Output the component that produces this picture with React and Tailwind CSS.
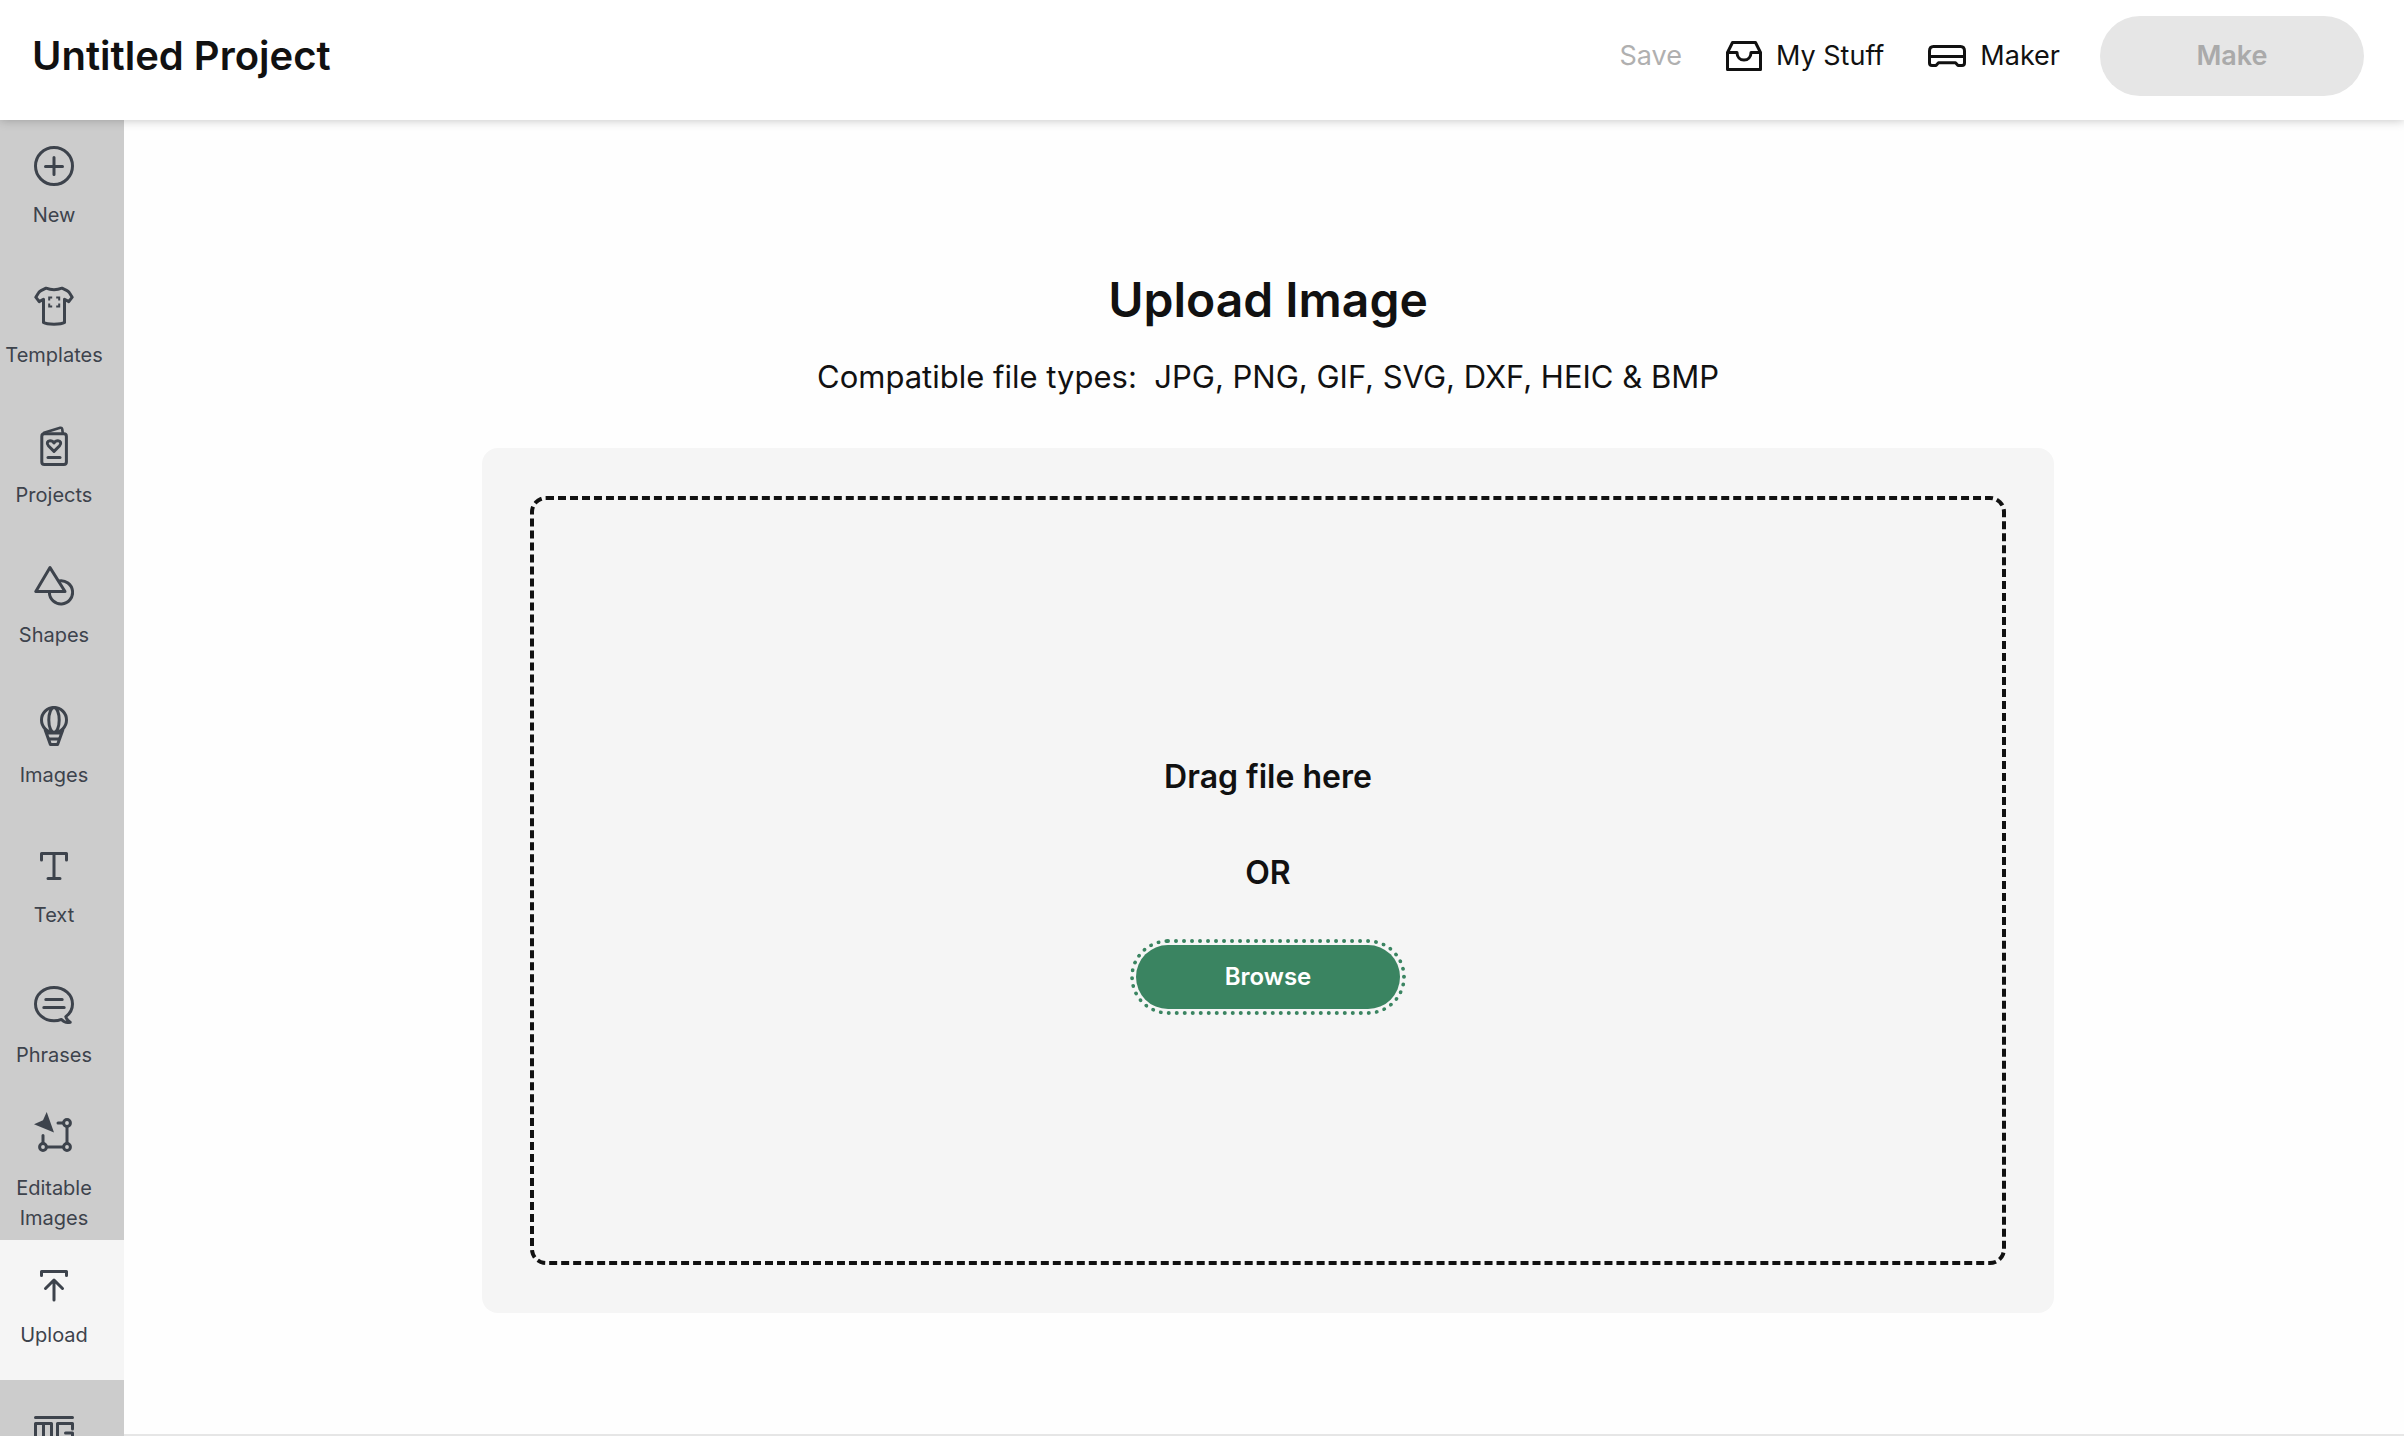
const icons = {
  new: (
    <>
      <circle cx="20" cy="20" r="18.5" />
      <path d="M11.5 20.5h17M20 11.5v17" />
    </>
  ),
  templates: (
    <>
      <path d="M12 2.2C17 4.2 23 4.2 28 2.2L33 4.6Q34.6 5.4 35.4 6.8L38.2 11.2 34.8 15.6 30.5 13.2V36.5C27 38.7 13 38.7 9.5 36.5V13.2L5.2 15.6 1.8 11.2 4.6 6.8Q5.4 5.4 7 4.6Z" />
      <path strokeWidth="2" strokeLinecap="butt" strokeLinejoin="miter" d="M15.2 14.5V11.4H18.2M22.2 11.4H25.2V14.5M25.2 17.5V20.6H22.2M18.2 20.6H15.2V17.5" />
    </>
  ),
  projects: (
    <>
      <rect x="7.8" y="7.8" width="24.6" height="30.7" rx="2.6" />
      <path strokeWidth="2.6" d="M10 6.8 26.2 1.8Q27.8 1.4 28.2 3L28.8 7.2" />
      <path d="M20 25.4 14.6 20C12 17.2 13.6 14.8 16 14.8 18 14.8 19.4 16 20 17 20.6 16 22 14.8 24 14.8 26.4 14.8 28 17.2 25.4 20Z" />
      <path d="M14 31.5h12" />
    </>
  ),
  shapes: (
    <>
      <path d="M16 1.6 1.8 25.5H31Z" />
      <path d="M25 14.9A11.6 11.6 0 1 1 15.4 26.5" />
    </>
  ),
  images: (
    <>
      <circle cx="20" cy="14" r="12.5" />
      <ellipse cx="20" cy="14" rx="5.2" ry="12.5" />
      <path d="M11.2 24 16.4 38.5H23.6L28.8 24M13 27H27M15.5 33H24.5" />
    </>
  ),
  text: <path d="M7.5 14V7.5H32.5V14M20 7.5V32.5M14 32.5H26" />,
  phrases: (
    <>
      <path d="M31.8 30.6C36 27.6 38.5 23 38.5 18 38.5 8.5 30.2 1.5 20 1.5S1.5 8.5 1.5 18 9.8 34.8 20 34.8C22.6 34.8 25.2 34.3 27.5 33.4 29.6 35.9 32.6 37.3 36.2 36.2 34 34.8 32.4 33 31.8 30.6Z" />
      <path d="M11.8 13.5H28.2M9.8 21.5H30.2" />
    </>
  ),
  editable: (
    <>
      <path fill="currentColor" stroke="none" d="M12.7 0 20 20.6 0 12.3 9 8.2Z" />
      <circle cx="33" cy="11" r="3.4" />
      <circle cx="33" cy="35" r="3.4" />
      <circle cx="9" cy="35" r="3.4" />
      <path d="M24 11H29.5M33 15V31M29 35H13M9 31V23.5" />
    </>
  ),
  upload: <path d="M7.5 9.5V5.5H32.5V9.5M20 34V14M11.5 22.5 20 14 28.5 22.5" />,
  monogram: <path d="M1.5 11.5H38.5M1.5 40V17.5H17.5V40M9.5 17.5V40M38.5 23V17.5H23.5V40M31.5 27H38.5V40" />,
};

const tools = [
  { id: "new", label: "New" },
  { id: "templates", label: "Templates" },
  { id: "projects", label: "Projects" },
  { id: "shapes", label: "Shapes" },
  { id: "images", label: "Images" },
  { id: "text", label: "Text" },
  { id: "phrases", label: "Phrases" },
  { id: "editable", label: "Editable Images", tall: true },
  { id: "upload", label: "Upload", active: true },
  { id: "monogram", label: "Monogram", iconOnly: true },
];

function ToolButton({ id, label, tall, active, iconOnly }) {
  return (
    <button
      type="button"
      aria-label={label}
      aria-current={active ? "page" : undefined}
      className={`flex h-[140px] w-full shrink-0 flex-col items-center pr-4 ${
        tall ? "gap-[21px] pt-3" : "gap-[14px] pt-[26px]"
      } ${active ? "bg-[#f5f5f5]" : ""}`}
    >
      <svg
        viewBox="0 0 40 40"
        className="size-10 shrink-0"
        fill="none"
        stroke="currentColor"
        strokeWidth="3"
        strokeLinecap="round"
        strokeLinejoin="round"
        aria-hidden="true"
      >
        {icons[id]}
      </svg>
      {!iconOnly && (
        <span className="w-[100px] text-center text-[20px] leading-[30px]">{label}</span>
      )}
    </button>
  );
}

function Header() {
  return (
    <header className="z-10 flex h-[120px] shrink-0 items-start justify-between bg-white pt-4 pr-10 pl-8 shadow-[0_0_10px_rgba(0,0,0,0.25)]">
      <h1 className="text-[40px] leading-20 font-semibold">Untitled Project</h1>
      <div className="flex h-20 items-center text-[27px] leading-10">
        <button type="button" disabled className="text-[#b0b0b0]">Save</button>
        <button type="button" className="ml-11 flex items-center gap-[14px]">
          <svg viewBox="0 0 36 30" className="h-[30px] w-9" fill="none" stroke="currentColor" strokeWidth="3" strokeLinejoin="round" aria-hidden="true">
            <path d="M1.5 11.5V28.5H34.5V11.5L29.5 1.5H6.5ZM1.5 11.5H11C11 16 14 19 18 19S25 16 25 11.5H34.5" />
          </svg>
          My Stuff
        </button>
        <button type="button" className="ml-11 flex items-center gap-[14px]">
          <svg viewBox="0 0 38 22" className="h-[22px] w-[38px]" fill="none" stroke="currentColor" strokeWidth="3" strokeLinejoin="round" aria-hidden="true">
            <path d="M5.5 1.5H32.5Q36.5 1.5 36.5 6V18Q36.5 20.5 34 20.5H30L27.5 17.8H10.5L8 20.5H4Q1.5 20.5 1.5 18V6Q1.5 1.5 5.5 1.5ZM1.5 11.5H36.5" />
          </svg>
          Maker
        </button>
        <button type="button" disabled className="ml-10 h-20 w-[264px] rounded-full bg-[#e6e6e6] font-semibold text-[#aaaaaa]">
          Make
        </button>
      </div>
    </header>
  );
}

export default function App() {
  return (
    <div className="flex h-screen flex-col overflow-hidden bg-white font-['Inter',sans-serif] text-[#111111]">
      <Header />
      <div className="flex min-h-0 flex-1">
        <nav aria-label="Design tools" className="flex w-[124px] shrink-0 flex-col overflow-hidden bg-[#cccccc] text-[#3d434c]">
          {tools.map((tool) => (
            <ToolButton key={tool.id} {...tool} />
          ))}
        </nav>
        <main className="flex min-w-0 flex-1 flex-col items-center border-b-2 border-[#e6e6e6] bg-[#fefefe] pt-[148px] pb-[121px] pl-2">
          <h2 className="text-[48px] leading-16 font-semibold">Upload Image</h2>
          <p className="mt-[21px] text-[31px] leading-12 whitespace-pre">
            {"Compatible file types:  JPG, PNG, GIF, SVG, DXF, HEIC & BMP"}
          </p>
          <section className="mt-[47px] flex w-full max-w-[1572px] flex-1 rounded-2xl bg-[#f5f5f5] p-12">
            <div className="flex flex-1 flex-col items-center justify-center gap-12 rounded-2xl border-4 border-dashed border-[#111111] text-[32px] leading-12 font-semibold">
              <p>Drag file here</p>
              <p>OR</p>
              <button
                type="button"
                className="h-16 w-[264px] rounded-full bg-[#3a8461] text-[24px] leading-8 text-white outline-4 outline-offset-2 outline-[#3a8461] outline-dotted"
              >
                Browse
              </button>
            </div>
          </section>
        </main>
      </div>
    </div>
  );
}
